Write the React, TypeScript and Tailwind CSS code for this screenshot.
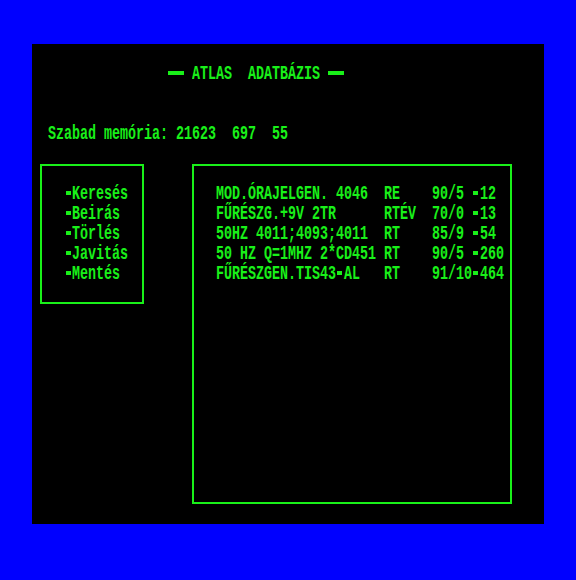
import React from 'react';

const green = 'text-[#19f019]';

// one text row of the character grid: 8px per char, 20px per row
function Row({ children }: { children: React.ReactNode }) {
  return (
    <div className="h-5 flex items-center whitespace-pre pt-px">
      <span className="inline-block leading-[12px] origin-center scale-y-[1.55]">{children}</span>
    </div>
  );
}

// the small filled block used as a bullet / minus sign
function Blk() {
  return (
    <span className="inline-flex w-2 h-5 items-center justify-center">
      <span className="block w-[5px] h-[4px] bg-[#19f019]" />
    </span>
  );
}

const menu = ['Keresés', 'Beirás', 'Törlés', 'Javitás', 'Mentés'];

const rows = [
  ['MOD.ÓRAJELGEN. 4046  ', 'RE    ', '90/5 ', '12'],
  ['FŰRÉSZG.+9V 2TR      ', 'RTÉV  ', '70/0 ', '13'],
  ['50HZ 4011;4093;4011  ', 'RT    ', '85/9 ', '54'],
  ['50 HZ Q=1MHZ 2*CD451 ', 'RT    ', '90/5 ', '260'],
  ['FŰRÉSZGEN.TIS43', 'RT    ', '91/10', '464'],
];

export default function App() {
  return (
    <div
      className={`w-[576px] h-[580px] bg-[#0000ff] pt-[44px] pl-[32px] font-bold text-[13.33px] ${green}`}
      style={{ fontFamily: '"Liberation Mono", "DejaVu Sans Mono", monospace' }}
    >
      <div className="w-[512px] h-[480px] bg-black pt-[19px]">
        {/* title */}
        <div className="pl-[136px] flex items-center h-5">
          <span className="block w-4 h-1 bg-[#19f019]" />
          <span className="w-2" />
          <Row>ATLAS  ADATBÁZIS</Row>
          <span className="w-2" />
          <span className="block w-4 h-1 bg-[#19f019]" />
        </div>

        <div className="mt-10 pl-4">
          <Row>Szabad memória: 21623  697  55</Row>
        </div>

        <div className="mt-[21px] flex pl-2 gap-12">
          {/* menu */}
          <div className="w-[104px] h-[140px] border-2 border-[#19f019] pt-[17px] pl-[22px]">
            {menu.map((m) => (
              <div key={m} className="flex">
                <Blk />
                <Row>{m}</Row>
              </div>
            ))}
          </div>

          {/* records */}
          <div className="w-[320px] h-[340px] border-2 border-[#19f019] pt-[17px] pl-[22px]">
            {rows.map((r, i) => (
              <div key={i} className="flex">
                {i === 4 ? (
                  <>
                    <Row>{r[0]}</Row>
                    <Blk />
                    <Row>{'AL   '}</Row>
                  </>
                ) : (
                  <Row>{r[0]}</Row>
                )}
                <Row>{r[1]}</Row>
                <Row>{r[2]}</Row>
                <Blk />
                <Row>{r[3]}</Row>
              </div>
            ))}
          </div>
        </div>
      </div>
    </div>
  );
}
